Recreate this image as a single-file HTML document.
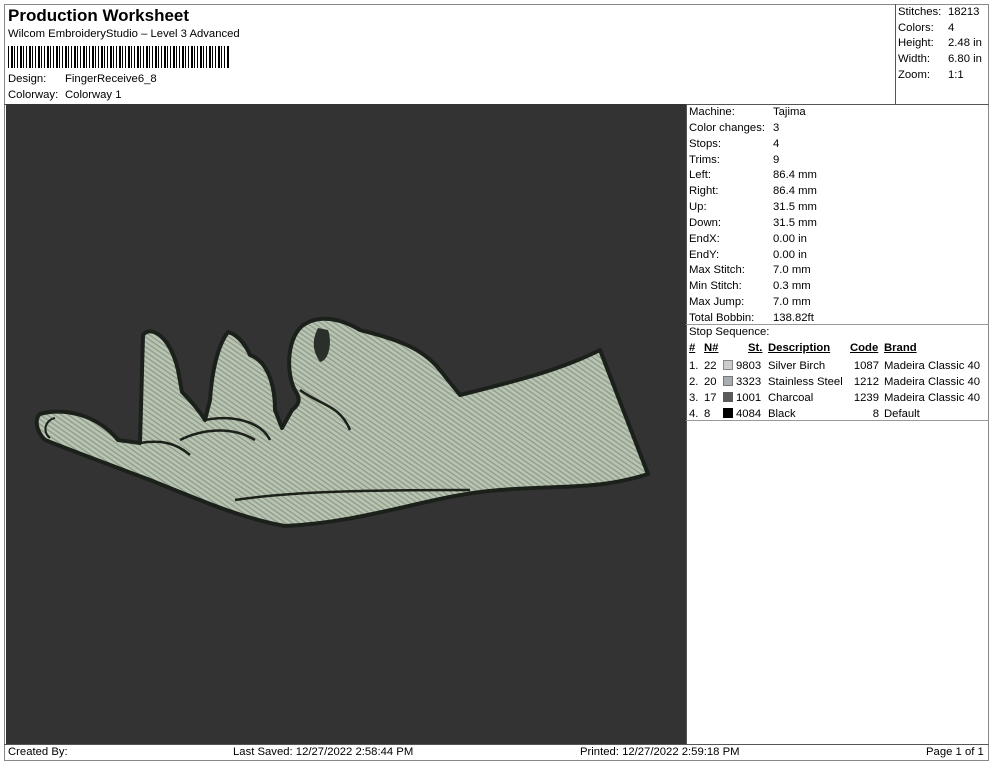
<!DOCTYPE html>
<html><head><meta charset="utf-8"><style>
*{margin:0;padding:0;box-sizing:border-box}
body{width:990px;height:762px;background:#fff;font-family:"Liberation Sans",Arial,sans-serif;font-size:11.3px;color:#000;position:relative;overflow:hidden}
.a{position:absolute;white-space:nowrap}
.u{text-decoration:underline;font-weight:bold}
</style></head><body>
<div class="a" style="left:4px;top:4px;width:985px;height:757px;border:1px solid #888"></div>
<div class="a" style="left:8px;top:6px;font-size:17px;font-weight:bold">Production Worksheet</div>
<div class="a" style="left:8px;top:28px">Wilcom EmbroideryStudio – Level 3 Advanced</div>
<div class="a" style="left:8px;top:46px;width:222px;height:22px;background:repeating-linear-gradient(90deg,#000 0 1px,#fff 1px 3px,#000 3px 5px,#fff 5px 6px,#000 6px 7px,#fff 7px 9px)"></div>
<div class="a" style="left:8px;top:73px">Design:</div><div class="a" style="left:65px;top:73px">FingerReceive6_8</div>
<div class="a" style="left:8px;top:89px">Colorway:</div><div class="a" style="left:65px;top:89px">Colorway 1</div>
<div class="a" style="left:895px;top:4px;width:94px;height:100px;border-left:1px solid #555"></div>
<div class="a" style="left:898px;top:5px;line-height:15.7px">Stitches:<br>Colors:<br>Height:<br>Width:<br>Zoom:</div>
<div class="a" style="left:948px;top:5px;line-height:15.7px">18213<br>4<br>2.48 in<br>6.80 in<br>1:1</div>
<div class="a" style="left:4px;top:104px;width:985px;height:1px;background:#555"></div>
<div class="a" style="left:6px;top:104px;width:680px;height:640px;background:#333">
<svg width="680" height="640" viewBox="6 104 680 640" style="position:absolute;left:0;top:0">
<defs><pattern id="st" width="4" height="4" patternUnits="userSpaceOnUse" patternTransform="rotate(35)"><rect width="4" height="4" fill="#b9c5b3"/><rect width="4" height="1.3" fill="#8f9a8a"/></pattern></defs>
<path d="M40,414 C60,408 95,412 118,440 L140,443 L143,335 C150,325 170,335 178,370 L182,392 C192,402 200,412 205,420 L210,400 C212,370 218,345 228,332 C240,335 248,350 250,355 C265,360 275,380 275,410 L282,428 L292,410 C300,404 300,398 296,392 C286,376 286,340 302,326 C318,314 340,318 360,330 C390,338 420,345 440,370 L460,395 C520,380 560,370 600,350 L648,474 C600,490 560,485 500,490 C430,495 370,522 285,526 C240,518 200,500 150,480 C110,465 70,450 45,440 C35,430 35,418 40,414 Z" fill="url(#st)" stroke="#1b201b" stroke-width="4" stroke-linejoin="round"/>
<path d="M318,328 C312,340 312,350 320,362 C330,360 332,340 328,330 Z" fill="#2a2f2a"/>
<path d="M300,390 C320,405 340,405 350,430 M180,440 C200,430 230,425 255,440 M140,443 C160,440 175,442 190,455 M235,500 C300,490 400,490 470,490 M205,420 C230,415 260,420 270,440" fill="none" stroke="#1b201b" stroke-width="2.5"/>
<path d="M55,418 C45,420 42,432 50,438" fill="none" stroke="#1b201b" stroke-width="2"/>
</svg></div>
<div class="a" style="left:686px;top:104px;width:1px;height:640px;background:#555"></div>
<div class="a" style="left:689px;top:105px;line-height:15.85px">Machine:<br>Color changes:<br>Stops:<br>Trims:<br>Left:<br>Right:<br>Up:<br>Down:<br>EndX:<br>EndY:<br>Max Stitch:<br>Min Stitch:<br>Max Jump:<br>Total Bobbin:</div>
<div class="a" style="left:773px;top:105px;line-height:15.85px">Tajima<br>3<br>4<br>9<br>86.4 mm<br>86.4 mm<br>31.5 mm<br>31.5 mm<br>0.00 in<br>0.00 in<br>7.0 mm<br>0.3 mm<br>7.0 mm<br>138.82ft</div>
<div class="a" style="left:686px;top:324px;width:303px;height:1px;background:#999"></div>
<div class="a" style="left:689px;top:326px">Stop Sequence:</div>
<div class="a u" style="left:689px;top:342px">#</div><div class="a u" style="left:704px;top:342px">N#</div><div class="a u" style="left:748px;top:342px">St.</div><div class="a u" style="left:768px;top:342px">Description</div><div class="a u" style="left:850px;top:342px">Code</div><div class="a u" style="left:884px;top:342px">Brand</div>
<div class="a" style="left:689px;top:358px;line-height:16px">1.<br>2.<br>3.<br>4.</div>
<div class="a" style="left:704px;top:358px;line-height:16px">22<br>20<br>17<br>8</div>
<div class="a" style="left:723px;top:360px;width:10px;height:10px;background:#ccc;border:1px solid #888"></div>
<div class="a" style="left:723px;top:376px;width:10px;height:10px;background:#a9adb0;border:1px solid #777"></div>
<div class="a" style="left:723px;top:392px;width:10px;height:10px;background:#5a5a5a"></div>
<div class="a" style="left:723px;top:408px;width:10px;height:10px;background:#000"></div>
<div class="a" style="left:736px;top:358px;line-height:16px">9803<br>3323<br>1001<br>4084</div>
<div class="a" style="left:768px;top:358px;line-height:16px">Silver Birch<br>Stainless Steel<br>Charcoal<br>Black</div>
<div class="a" style="left:840px;top:358px;width:39px;text-align:right;line-height:16px">1087<br>1212<br>1239<br>8</div>
<div class="a" style="left:884px;top:358px;line-height:16px">Madeira Classic 40<br>Madeira Classic 40<br>Madeira Classic 40<br>Default</div>
<div class="a" style="left:686px;top:420px;width:303px;height:1px;background:#999"></div>
<div class="a" style="left:4px;top:744px;width:985px;height:1px;background:#555"></div>
<div class="a" style="left:8px;top:746px">Created By:</div>
<div class="a" style="left:233px;top:746px">Last Saved: 12/27/2022 2:58:44 PM</div>
<div class="a" style="left:580px;top:746px">Printed: 12/27/2022 2:59:18 PM</div>
<div class="a" style="left:926px;top:746px">Page 1 of 1</div>
</body></html>
